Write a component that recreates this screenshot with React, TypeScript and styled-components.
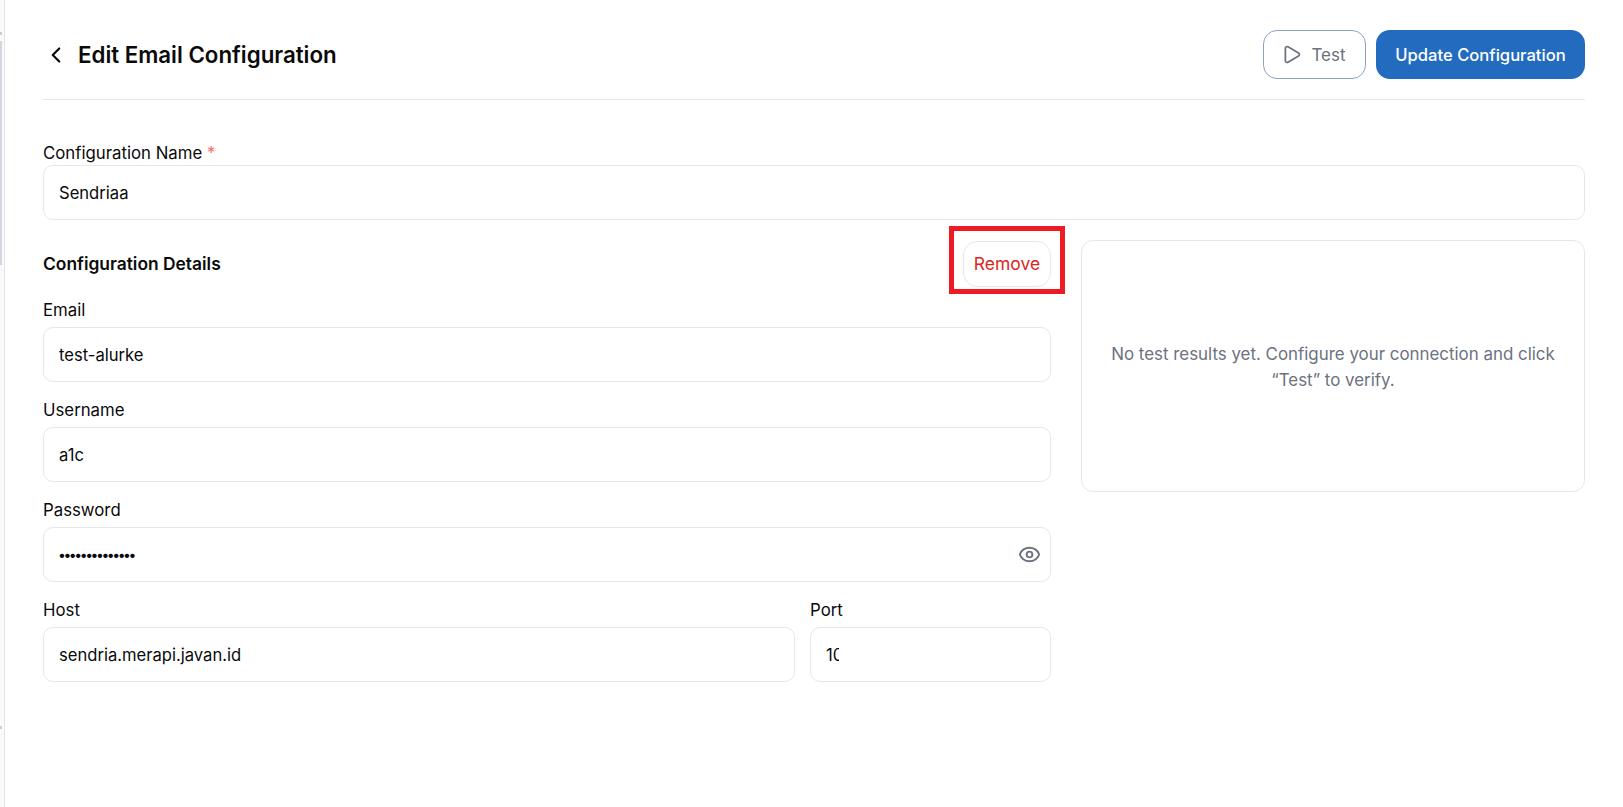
import React from "react";
import styled, { createGlobalStyle } from "styled-components";
import { ChevronLeft, Eye, Play } from "lucide-react";

const GlobalStyle = createGlobalStyle`
  html, body {
    margin: 0;
    padding: 0;
    background: #fff;
  }

  body {
    font-family: Inter, "Liberation Sans", sans-serif;
    color: #0a0a0a;
  }
`;

const App = () => {
  return (
    <Shell>
      <GlobalStyle />
      <SideEdge>
        <EdgeTick $top={32} />
        <EdgeThumb />
        <EdgeTick $top={726} />
      </SideEdge>
      <Page>
        <Header>
          <TitleGroup>
            <BackButton>
              <ChevronLeft size={26} strokeWidth={2} />
            </BackButton>
            <Title>Edit Email Configuration</Title>
          </TitleGroup>
          <Actions>
            <TestButton>
              <Play size={21} strokeWidth={2} />
              Test
            </TestButton>
            <PrimaryButton>Update Configuration</PrimaryButton>
          </Actions>
        </Header>

        <NameField>
          <Label>
            Configuration Name <Required>*</Required>
          </Label>
          <InputBox>
            <Value>Sendriaa</Value>
          </InputBox>
        </NameField>

        <Columns>
          <DetailsColumn>
            <DetailsHeader>
              <SectionTitle>Configuration Details</SectionTitle>
              <RemoveWrap>
                <RemoveButton>Remove</RemoveButton>
                <Highlight />
              </RemoveWrap>
            </DetailsHeader>

            <Field>
              <FieldLabel>Email</FieldLabel>
              <InputBox>
                <Value>test-alurke</Value>
              </InputBox>
            </Field>

            <Field>
              <FieldLabel>Username</FieldLabel>
              <InputBox>
                <Value>a1c</Value>
              </InputBox>
            </Field>

            <Field>
              <FieldLabel>Password</FieldLabel>
              <InputBox>
                <Dots>••••••••••••••</Dots>
                <EyeButton>
                  <Eye size={23} strokeWidth={2} />
                </EyeButton>
              </InputBox>
            </Field>

            <HostRow>
              <Field>
                <FieldLabel>Host</FieldLabel>
                <InputBox>
                  <Value>sendria.merapi.javan.id</Value>
                </InputBox>
              </Field>
              <Field>
                <FieldLabel>Port</FieldLabel>
                <InputBox>
                  <Value $clip={13}>10</Value>
                </InputBox>
              </Field>
            </HostRow>
          </DetailsColumn>

          <ResultCard>
            <ResultText>
              No test results yet. Configure your connection and click “Test” to
              verify.
            </ResultText>
          </ResultCard>
        </Columns>
      </Page>
    </Shell>
  );
};

const Shell = styled.div`
  display: flex;
  min-height: 807px;
  background: #fff;
`;

const SideEdge = styled.div`
  position: relative;
  flex: 0 0 4px;
  background: #fafafa;
  border-right: 1px solid #e3e4ea;
`;

const EdgeThumb = styled.div`
  position: absolute;
  top: 41px;
  left: 0;
  width: 2px;
  height: 224px;
  background: #d4d5de;
`;

const EdgeTick = styled.div<{ $top: number }>`
  position: absolute;
  top: ${(props) => props.$top}px;
  left: 0;
  width: 2px;
  height: 3px;
  background: #d0d0d4;
`;

const Page = styled.main`
  flex: 1;
  min-width: 0;
  padding: 30px 38px 0;
`;

const Header = styled.header`
  display: flex;
  align-items: center;
  justify-content: space-between;
  padding-bottom: 20px;
  border-bottom: 1px solid #e5e7eb;
`;

const TitleGroup = styled.div`
  display: flex;
  align-items: center;
  gap: 9px;
`;

const BackButton = styled.span`
  display: flex;
  width: 26px;
  color: #0a0a0a;
`;

const Title = styled.h1`
  margin: 0;
  font-size: 22.3px;
  font-weight: 600;
  line-height: 28px;
  color: #0a0a0a;
`;

const Actions = styled.div`
  display: flex;
  gap: 10px;
`;

const TestButton = styled.button`
  display: flex;
  align-items: center;
  justify-content: center;
  gap: 9px;
  width: 103px;
  height: 49px;
  padding: 0 2px 0 0;
  font: inherit;
  font-size: 17px;
  color: #6b7280;
  background: #fff;
  border: 1px solid #8da2c0;
  border-radius: 14px;
`;

const PrimaryButton = styled.button`
  width: 209px;
  height: 49px;
  padding: 0;
  font: inherit;
  font-size: 16.6px;
  font-weight: 500;
  color: #fff;
  background: #236bbf;
  border: 0;
  border-radius: 14px;
`;

const Field = styled.div`
  display: flex;
  flex-direction: column;
  min-width: 0;
`;

const NameField = styled(Field)`
  margin-top: 41px;
`;

const Label = styled.label`
  font-size: 16.8px;
  line-height: 24px;
  color: #0a0a0a;
`;

const FieldLabel = styled(Label)`
  margin-bottom: 5px;
`;

const Required = styled.span`
  color: #f87171;
`;

const InputBox = styled.div`
  display: flex;
  align-items: center;
  justify-content: space-between;
  box-sizing: border-box;
  height: 55px;
  padding: 0 15px;
  background: #fff;
  border: 1px solid #e5e7eb;
  border-radius: 10px;
`;

const Value = styled.span<{ $clip?: number }>`
  display: block;
  overflow: hidden;
  max-width: ${(props) => (props.$clip ? `${props.$clip}px` : "none")};
  font-size: 16.6px;
  line-height: 24px;
  white-space: nowrap;
  color: #0a0a0a;
`;

const Dots = styled.span`
  margin-left: -1px;
  font-size: 14px;
  letter-spacing: -2.45px;
  color: #0a0a0a;
`;

const EyeButton = styled.span`
  display: flex;
  margin-right: -6px;
  color: #6b7280;
`;

const Columns = styled.div`
  display: grid;
  grid-template-columns: 2fr 1fr;
  gap: 30px;
  align-items: start;
  margin-top: 20px;
`;

const DetailsColumn = styled.section`
  display: flex;
  flex-direction: column;
  gap: 16px;
`;

const DetailsHeader = styled.div`
  display: flex;
  align-items: center;
  justify-content: space-between;
  height: 46px;
  margin-top: 1px;
  margin-bottom: -5px;
`;

const SectionTitle = styled.h2`
  margin: 0;
  font-size: 17.4px;
  font-weight: 600;
  line-height: 24px;
`;

const RemoveWrap = styled.div`
  position: relative;
`;

const RemoveButton = styled.button`
  display: block;
  width: 88px;
  height: 46px;
  padding: 0 0 1px;
  font: inherit;
  font-size: 17.5px;
  color: #dc2626;
  background: #fff;
  border: 1px solid #e5e7eb;
  border-radius: 14px;
`;

const Highlight = styled.div`
  position: absolute;
  top: -15px;
  right: -14px;
  bottom: -7px;
  left: -14px;
  border: 5px solid #ed1c24;
  pointer-events: none;
`;

const HostRow = styled.div`
  display: grid;
  grid-template-columns: 752px 1fr;
  gap: 15px;
`;

const ResultCard = styled.aside`
  display: flex;
  align-items: center;
  justify-content: center;
  box-sizing: border-box;
  height: 252px;
  padding: 2px 24px 0;
  background: #fff;
  border: 1px solid #e5e7eb;
  border-radius: 12px;
`;

const ResultText = styled.p`
  margin: 0;
  font-size: 16.9px;
  line-height: 26px;
  text-align: center;
  color: #6b7280;
`;

export default App;
